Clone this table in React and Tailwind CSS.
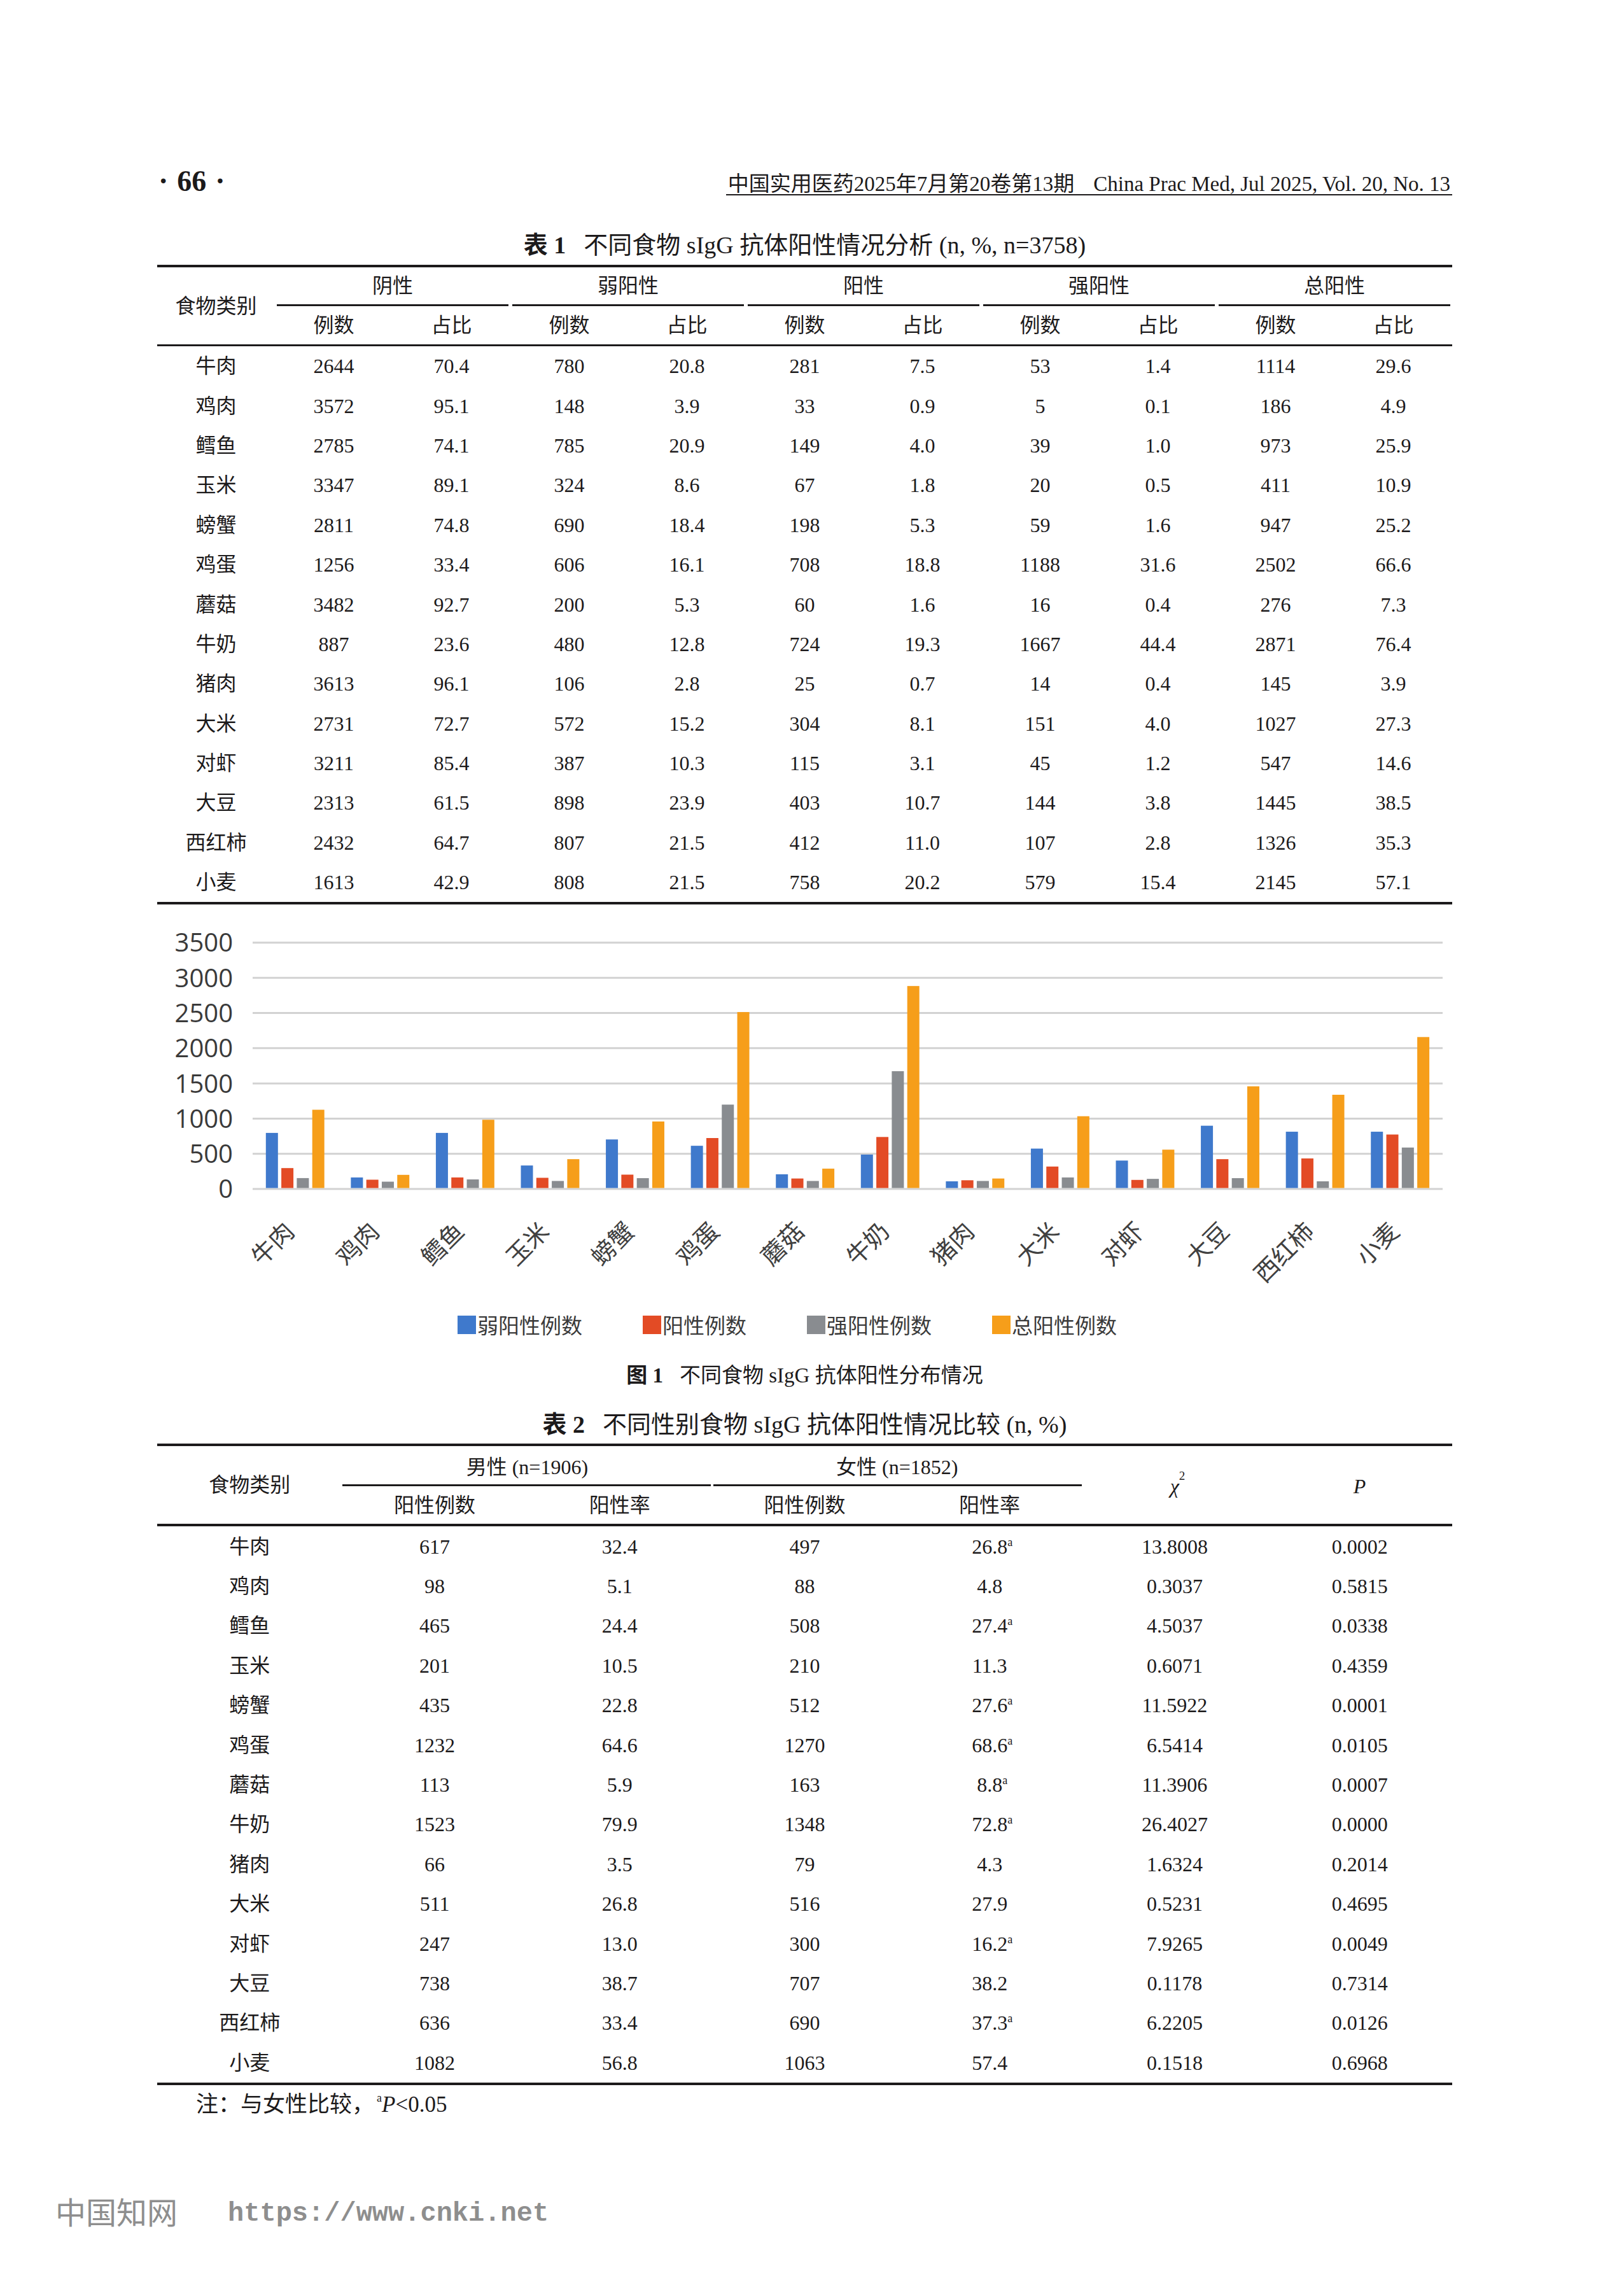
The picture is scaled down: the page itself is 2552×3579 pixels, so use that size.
import React from 'react';

const table1 = [
  ['牛肉', '2644', '70.4', '780', '20.8', '281', '7.5', '53', '1.4', '1114', '29.6'],
  ['鸡肉', '3572', '95.1', '148', '3.9', '33', '0.9', '5', '0.1', '186', '4.9'],
  ['鳕鱼', '2785', '74.1', '785', '20.9', '149', '4.0', '39', '1.0', '973', '25.9'],
  ['玉米', '3347', '89.1', '324', '8.6', '67', '1.8', '20', '0.5', '411', '10.9'],
  ['螃蟹', '2811', '74.8', '690', '18.4', '198', '5.3', '59', '1.6', '947', '25.2'],
  ['鸡蛋', '1256', '33.4', '606', '16.1', '708', '18.8', '1188', '31.6', '2502', '66.6'],
  ['蘑菇', '3482', '92.7', '200', '5.3', '60', '1.6', '16', '0.4', '276', '7.3'],
  ['牛奶', '887', '23.6', '480', '12.8', '724', '19.3', '1667', '44.4', '2871', '76.4'],
  ['猪肉', '3613', '96.1', '106', '2.8', '25', '0.7', '14', '0.4', '145', '3.9'],
  ['大米', '2731', '72.7', '572', '15.2', '304', '8.1', '151', '4.0', '1027', '27.3'],
  ['对虾', '3211', '85.4', '387', '10.3', '115', '3.1', '45', '1.2', '547', '14.6'],
  ['大豆', '2313', '61.5', '898', '23.9', '403', '10.7', '144', '3.8', '1445', '38.5'],
  ['西红柿', '2432', '64.7', '807', '21.5', '412', '11.0', '107', '2.8', '1326', '35.3'],
  ['小麦', '1613', '42.9', '808', '21.5', '758', '20.2', '579', '15.4', '2145', '57.1'],
];

const table2 = [
  ['牛肉', '617', '32.4', '497', '26.8', true, '13.8008', '0.0002'],
  ['鸡肉', '98', '5.1', '88', '4.8', false, '0.3037', '0.5815'],
  ['鳕鱼', '465', '24.4', '508', '27.4', true, '4.5037', '0.0338'],
  ['玉米', '201', '10.5', '210', '11.3', false, '0.6071', '0.4359'],
  ['螃蟹', '435', '22.8', '512', '27.6', true, '11.5922', '0.0001'],
  ['鸡蛋', '1232', '64.6', '1270', '68.6', true, '6.5414', '0.0105'],
  ['蘑菇', '113', '5.9', '163', '8.8', true, '11.3906', '0.0007'],
  ['牛奶', '1523', '79.9', '1348', '72.8', true, '26.4027', '0.0000'],
  ['猪肉', '66', '3.5', '79', '4.3', false, '1.6324', '0.2014'],
  ['大米', '511', '26.8', '516', '27.9', false, '0.5231', '0.4695'],
  ['对虾', '247', '13.0', '300', '16.2', true, '7.9265', '0.0049'],
  ['大豆', '738', '38.7', '707', '38.2', false, '0.1178', '0.7314'],
  ['西红柿', '636', '33.4', '690', '37.3', true, '6.2205', '0.0126'],
  ['小麦', '1082', '56.8', '1063', '57.4', false, '0.1518', '0.6968'],
];

// chart values as drawn in the figure (weak, positive, strong, total)
const chartData = [
  ['牛肉', [783, 283, 141, 1112]],
  ['鸡肉', [150, 118, 90, 187]],
  ['鳕鱼', [783, 150, 122, 970]],
  ['玉米', [320, 145, 100, 410]],
  ['螃蟹', [690, 190, 140, 945]],
  ['鸡蛋', [600, 710, 1185, 2500]],
  ['蘑菇', [195, 135, 100, 275]],
  ['牛奶', [475, 725, 1660, 2870]],
  ['猪肉', [95, 110, 100, 135]],
  ['大米', [560, 305, 150, 1020]],
  ['对虾', [390, 115, 130, 545]],
  ['大豆', [885, 410, 140, 1445]],
  ['西红柿', [800, 420, 95, 1325]],
  ['小麦', [800, 760, 575, 2145]],
];

const colors = ['#3f79cc', '#e34b25', '#898c90', '#f69e1a'];
const legend = ['弱阳性例数', '阳性例数', '强阳性例数', '总阳性例数'];

const Chart = () => {
  const y0 = 447;
  const k = 0.11057;
  const x0 = 150;
  const x1 = 2020;
  const band = (x1 - x0) / 14;
  const ticks = [0, 500, 1000, 1500, 2000, 2500, 3000, 3500];
  return (
    <svg width="2035" height="630" className="block overflow-visible">
      {ticks.map((v) => (
        <line key={v} x1={x0} x2={x1} y1={y0 - v * k} y2={y0 - v * k} stroke="#d2d2d2" strokeWidth="3" />
      ))}
      {ticks.map((v) => (
        <text
          key={'t' + v}
          x="119"
          y={y0 - v * k}
          dy="0.36em"
          textAnchor="end"
          fontSize="40"
          fill="#3a3a3a"
          fontFamily="'Open Sans', 'Liberation Sans', sans-serif"
        >
          {v}
        </text>
      ))}
      {chartData.map(([name, vals], i) => {
        const c = x0 + band * (i + 0.5);
        return (
          <g key={name}>
            {vals.map((v, j) => (
              <rect key={j} x={c - 46 + j * 24.3} y={y0 - 1.5 - v * k} width="19" height={v * k} fill={colors[j]} />
            ))}
            <text
              transform={`translate(${c + 1} ${y0 + 69}) rotate(-45)`}
              textAnchor="end"
              fontSize="38"
              fill="#404040"
              fontFamily="'Noto Sans CJK SC', sans-serif"
            >
              {name}
            </text>
          </g>
        );
      })}
    </svg>
  );
};

const Sup = ({ children }) => (
  <span className="absolute left-full top-[0px] text-[18px] leading-none">{children}</span>
);

export default function App() {
  return (
    <div className="relative w-[2552px] min-h-[3579px] bg-white text-[#1c1a1b] font-['Liberation_Serif','Noto_Sans_CJK_SC',serif]">
      <div className="ml-[247px] w-[2035px] pt-[265px]">
        {/* running header */}
        <div className="flex h-[40px] items-center justify-between">
          <div className="flex items-center gap-[14px] pl-[2px] text-[46px] font-bold leading-none">
            <span>·</span>
            <span>66</span>
            <span>·</span>
          </div>
          <div className="mb-[-2px] flex self-end border-b-2 border-[#1c1a1b] px-[3px] text-[33px] leading-[32px]">
            <span>中国实用医药2025年7月第20卷第13期</span>
            <span className="ml-[30px]">China Prac Med, Jul 2025, Vol. 20, No. 13</span>
          </div>
        </div>

        {/* table 1 */}
        <div className="mt-[58px] flex h-[44px] items-center justify-center text-[38px] leading-none">
          <span className="mr-[28px] font-bold">表 1</span>
          <span>不同食物 sIgG 抗体阳性情况分析 (n, %, n=3758)</span>
        </div>
        <div className="mt-[9px] h-[4px] bg-[#1c1a1b]" />
        <div className="flex text-[32px] leading-none">
          <div className="flex w-[185px] items-center justify-center">食物类别</div>
          <div className="flex-1">
            <div className="grid h-[58px] grid-cols-5">
              {['阴性', '弱阳性', '阳性', '强阳性', '总阳性'].map((g) => (
                <div key={g} className="flex items-center justify-center">{g}</div>
              ))}
            </div>
            <div className="grid h-[3px] grid-cols-5">
              {[0, 1, 2, 3, 4].map((i) => (
                <div key={i} className="mx-[3px] bg-[#1c1a1b]" />
              ))}
            </div>
            <div className="grid h-[60px] grid-cols-10">
              {[0, 1, 2, 3, 4].flatMap((i) => [
                <div key={'a' + i} className="flex items-center justify-center">例数</div>,
                <div key={'b' + i} className="flex items-center justify-center">占比</div>,
              ])}
            </div>
          </div>
        </div>
        <div className="h-[3px] bg-[#1c1a1b]" />
        <div className="text-[32px] leading-none">
          {table1.map((row) => (
            <div key={row[0]} className="grid h-[62.4px] grid-cols-11">
              {row.map((cell, i) => (
                <div key={i} className="flex items-center justify-center">{cell}</div>
              ))}
            </div>
          ))}
        </div>
        <div className="h-[4px] bg-[#1c1a1b]" />

        {/* figure 1 */}
        <Chart />
        <div className="ml-[472px] flex h-[60px] items-center gap-[95px] font-['Noto_Sans_CJK_SC',sans-serif] text-[33px] leading-none text-[#3a3a3a]">
          {legend.map((l, i) => (
            <div key={l} className="flex items-center gap-[2px]">
              <span className={['h-[29px] w-[29px] bg-[#3f79cc]', 'h-[29px] w-[29px] bg-[#e34b25]', 'h-[29px] w-[29px] bg-[#898c90]', 'h-[29px] w-[29px] bg-[#f69e1a]'][i]} />
              <span>{l}</span>
            </div>
          ))}
        </div>
        <div className="mt-[30px] flex h-[40px] items-center justify-center text-[33px] leading-none">
          <span className="mr-[26px] font-bold">图 1</span>
          <span>不同食物 sIgG 抗体阳性分布情况</span>
        </div>

        {/* table 2 */}
        <div className="mt-[35px] flex h-[44px] items-center justify-center text-[38px] leading-none">
          <span className="mr-[28px] font-bold">表 2</span>
          <span>不同性别食物 sIgG 抗体阳性情况比较 (n, %)</span>
        </div>
        <div className="mt-[8px] h-[4px] bg-[#1c1a1b]" />
        <div className="flex text-[32px] leading-none">
          <div className="flex w-[290.7px] items-center justify-center">食物类别</div>
          <div className="w-[581.4px]">
            <div className="flex h-[60px] items-center justify-center pt-[6px]">男性 (n=1906)</div>
            <div className="mr-[2px] h-[3px] bg-[#1c1a1b]" />
            <div className="grid h-[59px] grid-cols-2">
              <div className="flex items-center justify-center">阳性例数</div>
              <div className="flex items-center justify-center">阳性率</div>
            </div>
          </div>
          <div className="w-[581.4px]">
            <div className="flex h-[60px] items-center justify-center pt-[6px]">女性 (n=1852)</div>
            <div className="ml-[2px] h-[3px] bg-[#1c1a1b]" />
            <div className="grid h-[59px] grid-cols-2">
              <div className="flex items-center justify-center">阳性例数</div>
              <div className="flex items-center justify-center">阳性率</div>
            </div>
          </div>
          <div className="flex w-[290.7px] items-center justify-center pt-[4px]">
            <span className="relative italic">
              χ<span className="absolute left-full top-[-10px] not-italic text-[19px]">2</span>
            </span>
          </div>
          <div className="flex flex-1 items-center justify-center pt-[4px] italic">P</div>
        </div>
        <div className="h-[4px] bg-[#1c1a1b]" />
        <div className="text-[32px] leading-none">
          {table2.map((row) => (
            <div key={row[0]} className="grid h-[62.4px] grid-cols-7">
              <div className="flex items-center justify-center">{row[0]}</div>
              <div className="flex items-center justify-center">{row[1]}</div>
              <div className="flex items-center justify-center">{row[2]}</div>
              <div className="flex items-center justify-center">{row[3]}</div>
              <div className="flex items-center justify-center">
                <span className="relative">
                  {row[4]}
                  {row[5] && <Sup>a</Sup>}
                </span>
              </div>
              <div className="flex items-center justify-center">{row[6]}</div>
              <div className="flex items-center justify-center">{row[7]}</div>
            </div>
          ))}
        </div>
        <div className="h-[4px] bg-[#1c1a1b]" />
        <div className="mt-[11px] flex h-[40px] items-center pl-[61px] text-[35px] leading-none">
          <span>注：与女性比较，</span>
          <span className="relative top-[-11px] ml-[4px] text-[18px]">a</span>
          <span className="italic">P</span>
          <span>&lt;0.05</span>
        </div>

        {/* watermark */}
        <div className="ml-[-160px] mt-[126px] flex h-[50px] items-center text-[#8e8e8e] leading-none">
          <span className="text-[48px]">中国知网</span>
          <span className="ml-[79px] font-['Liberation_Mono',monospace] text-[42px] font-bold">https://www.cnki.net</span>
        </div>
      </div>
    </div>
  );
}
